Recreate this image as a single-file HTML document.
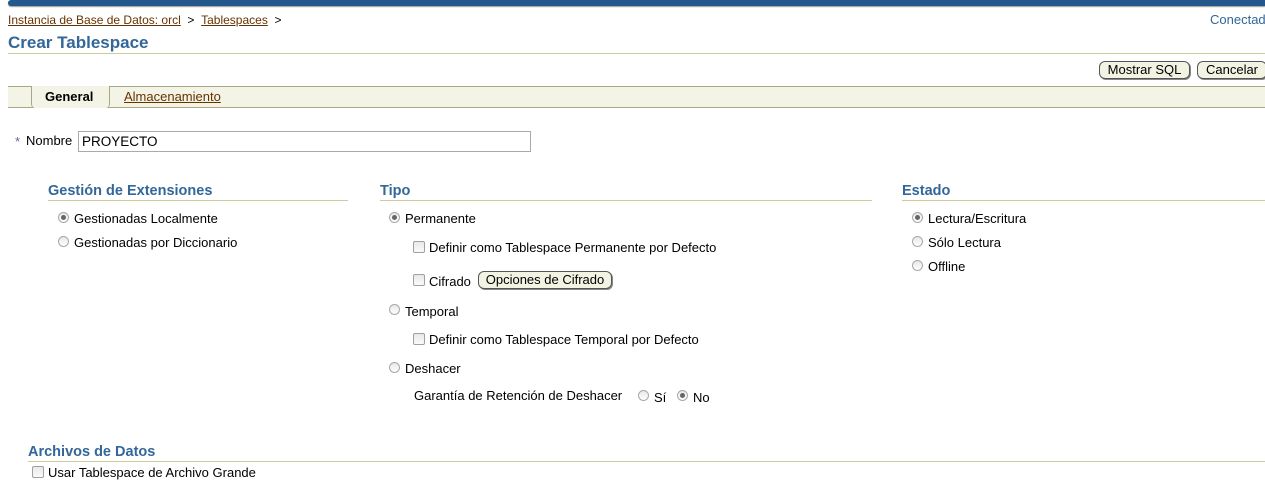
<!DOCTYPE html>
<html><head><meta charset="utf-8"><style>
*{margin:0;padding:0;box-sizing:border-box}
body{width:1265px;height:471px;overflow:hidden;background:#fff;font-family:"Liberation Sans",Arial,sans-serif;font-size:13px;color:#000;position:relative}
.a{position:absolute;white-space:nowrap}
.lnk{color:#663300;text-decoration:underline}
.h{color:#336699;font-weight:bold;font-size:14.5px}
.rule{position:absolute;height:1px;background:#cccc99}
.r{position:absolute;width:11px;height:11px;border-radius:50%;border:1px solid #a8a8a8;background:linear-gradient(#e8e8e8,#fff)}
.r.on::after{content:"";position:absolute;left:2px;top:2px;width:5px;height:5px;border-radius:50%;background:#666}
.c{position:absolute;width:12px;height:12px;border:1px solid #a0a0a0;border-radius:2px;background:linear-gradient(#e8e8e8,#fbfbfb)}
.btn{position:absolute;height:18px;border:1px solid #555;border-radius:6px;background:#f3f3e3;font-size:13px;text-align:center;line-height:16px;box-shadow:1px 1px 0 #888}
</style></head><body>
<div class="a" style="left:8px;top:0;width:1257px;height:6px;background:#24578b;border-radius:3px 0 0 3px;box-shadow:0 1px 1px #999"></div>
<div class="a" style="left:8px;top:13px;font-size:12px"><span class="lnk">Instancia de Base de Datos: orcl</span>&nbsp; &gt; &nbsp;<span class="lnk">Tablespaces</span>&nbsp; &gt;</div>
<div class="a" style="left:1210px;top:12px;color:#336699;font-size:13px">Conectado</div>
<div class="a h" style="left:8px;top:33px;font-size:17px">Crear Tablespace</div>
<div class="rule" style="left:8px;top:53px;width:1257px"></div>
<div class="btn" style="left:1099px;top:61px;width:91px">Mostrar SQL</div>
<div class="btn" style="left:1197px;top:61px;width:70px">Cancelar</div>
<div class="a" style="left:8px;top:86px;width:1257px;height:22px;background:#f4f4e6;border-top:1px solid #a8a888;border-bottom:1px solid #a8a888"></div>
<div class="a" style="left:31px;top:86px;width:79px;height:22px;border-left:1px solid #a8a888;border-right:1px solid #a8a888;border-radius:0 0 4px 4px;background:#f4f4e6"></div>
<div class="a" style="left:45px;top:89px;font-weight:bold">General</div>
<div class="a lnk" style="left:124px;top:89px">Almacenamiento</div>
<div class="a" style="left:15px;top:134px;color:#669">*</div>
<div class="a" style="left:26px;top:133px">Nombre</div>
<div class="a" style="left:78px;top:131px;width:453px;height:21px;border:1px solid #aaa;padding:2px 3px;font-size:13.5px">PROYECTO</div>

<div class="a h" style="left:48px;top:183px">Gestión de Extensiones</div>
<div class="rule" style="left:48px;top:200px;width:300px"></div>
<div class="r on" style="left:58px;top:212px"></div><div class="a" style="left:74px;top:211px">Gestionadas Localmente</div>
<div class="r" style="left:58px;top:236px"></div><div class="a" style="left:74px;top:235px">Gestionadas por Diccionario</div>

<div class="a h" style="left:380px;top:183px">Tipo</div>
<div class="rule" style="left:380px;top:200px;width:492px"></div>
<div class="r on" style="left:389px;top:212px"></div><div class="a" style="left:405px;top:211px">Permanente</div>
<div class="c" style="left:413px;top:241px"></div><div class="a" style="left:429px;top:240px">Definir como Tablespace Permanente por Defecto</div>
<div class="c" style="left:413px;top:274px"></div><div class="a" style="left:429px;top:274px">Cifrado</div>
<div class="btn" style="left:478px;top:271px;width:134px">Opciones de Cifrado</div>
<div class="r" style="left:389px;top:304px"></div><div class="a" style="left:405px;top:304px">Temporal</div>
<div class="c" style="left:413px;top:333px"></div><div class="a" style="left:429px;top:332px">Definir como Tablespace Temporal por Defecto</div>
<div class="r" style="left:389px;top:362px"></div><div class="a" style="left:405px;top:361px">Deshacer</div>
<div class="a" style="left:414px;top:388px">Garantía de Retención de Deshacer</div>
<div class="r" style="left:638px;top:390px"></div><div class="a" style="left:654px;top:390px">Sí</div>
<div class="r on" style="left:677px;top:390px"></div><div class="a" style="left:693px;top:390px">No</div>

<div class="a h" style="left:902px;top:183px">Estado</div>
<div class="rule" style="left:902px;top:200px;width:363px"></div>
<div class="r on" style="left:912px;top:212px"></div><div class="a" style="left:928px;top:211px">Lectura/Escritura</div>
<div class="r" style="left:912px;top:236px"></div><div class="a" style="left:928px;top:235px">Sólo Lectura</div>
<div class="r" style="left:912px;top:260px"></div><div class="a" style="left:928px;top:259px">Offline</div>

<div class="a h" style="left:28px;top:444px">Archivos de Datos</div>
<div class="rule" style="left:28px;top:461px;width:1237px"></div>
<div class="c" style="left:32px;top:466px"></div><div class="a" style="left:48px;top:465px">Usar Tablespace de Archivo Grande</div>
</body></html>
